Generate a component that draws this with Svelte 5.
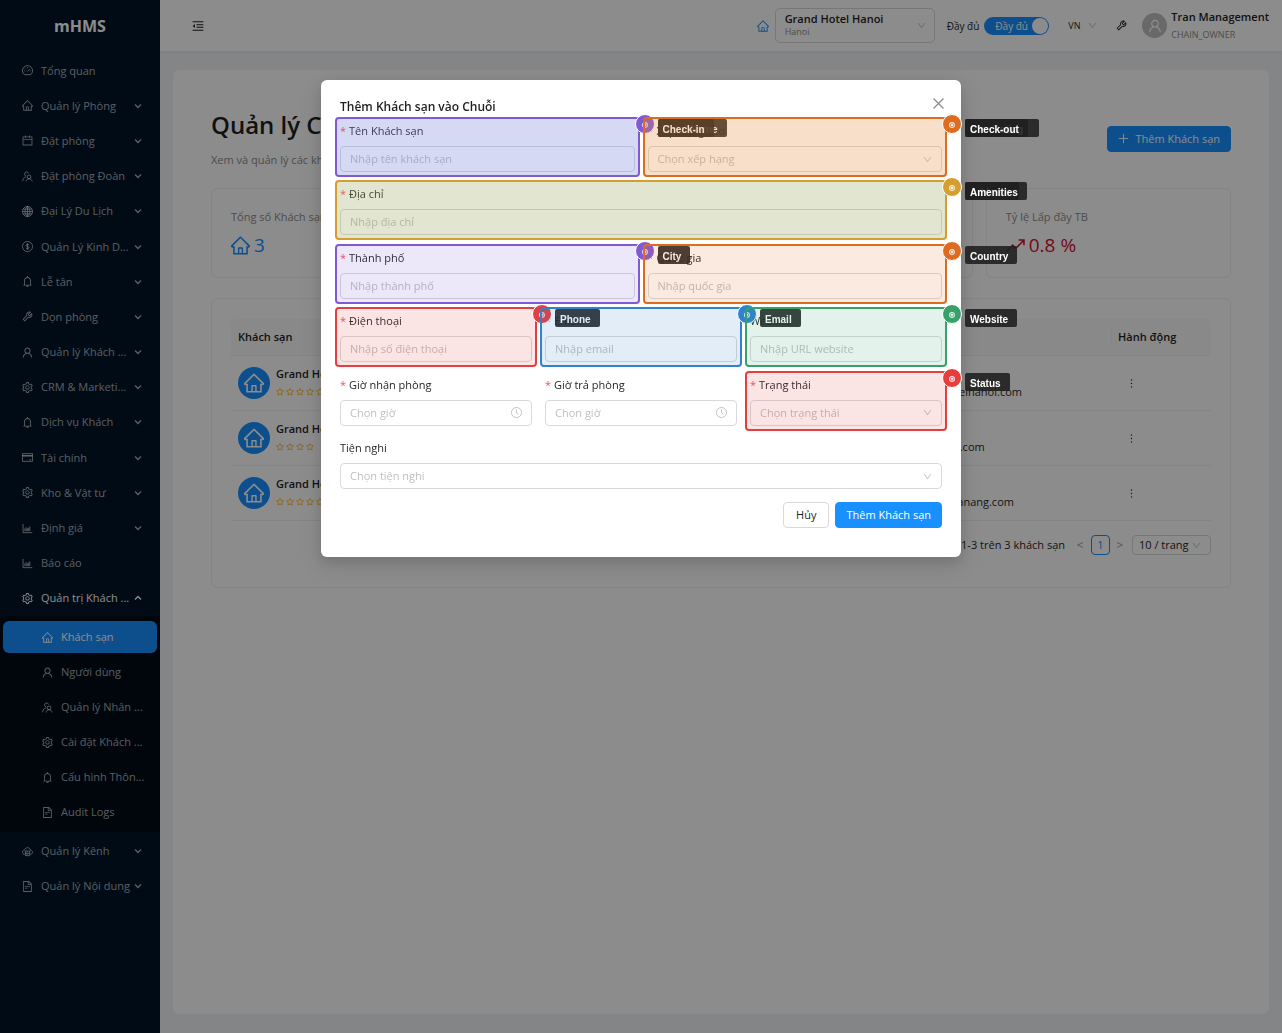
<script>
    // icon outlines live on a 1024 grid: "d" is filled, "line" is stroked
    const icons = {
        home: {
            d: "M946.5 505L560.1 118.8l-25.9-25.9a31.5 31.5 0 00-44.4 0L77.5 505a63.9 63.9 0 00-18.8 46c.4 35.2 29.7 63.3 64.9 63.3h42.5V940h691.8V614.3h43.4c17.1 0 33.2-6.7 45.3-18.8a63.6 63.6 0 0018.7-45.3c0-17-6.7-33.1-18.8-45.2zM568 868H456V664h112v204zm217.9-325.7V868H632V640c0-22.1-17.9-40-40-40H432c-22.1 0-40 17.9-40 40v228H238.1V542.3h-96l370-369.7 23.1 23.1L882 542.3h-96.1z",
        },
        user: {
            d: "M858.5 763.6a374 374 0 00-80.6-119.5 375.63 375.63 0 00-119.5-80.6c-.4-.2-.8-.3-1.2-.5C719.5 518 760 444.7 760 362c0-137-111-248-248-248S264 225 264 362c0 82.7 40.5 156 102.8 201.1-.4.2-.8.3-1.2.5-44.8 18.9-85 46-119.5 80.6a375.63 375.63 0 00-80.6 119.5A371.7 371.7 0 00136 901.8a8 8 0 008 8.2h60c4.4 0 7.9-3.5 8-7.8 2-77.2 33-149.5 87.8-204.3 56.7-56.7 132-87.9 212.2-87.9s155.5 31.2 212.2 87.9C779 752.7 810 825 812 902.2c.1 4.4 3.6 7.8 8 7.8h60a8 8 0 008-8.2c-1-47.8-10.9-94.3-29.5-138.2zM512 534c-45.9 0-89.1-17.9-121.6-50.4S340 407.9 340 362c0-45.9 17.9-89.1 50.4-121.6S466.1 190 512 190s89.1 17.9 121.6 50.4S684 316.1 684 362c0 45.9-17.9 89.1-50.4 121.6S557.9 534 512 534z",
        },
        down: {
            d: "M884 256h-75c-5.1 0-9.9 2.5-12.9 6.6L512 654.2 227.9 262.6c-3-4.1-7.8-6.6-12.9-6.6h-75c-6.5 0-10.3 7.4-6.5 12.7l352.6 486.1c12.8 17.6 39 17.6 51.7 0l352.6-486.1c3.9-5.3.1-12.7-6.4-12.7z",
        },
        calendar: {
            d: "M880 184H712v-64c0-4.4-3.6-8-8-8h-56c-4.4 0-8 3.6-8 8v64H384v-64c0-4.4-3.6-8-8-8h-56c-4.4 0-8 3.6-8 8v64H144c-17.7 0-32 14.3-32 32v664c0 17.7 14.3 32 32 32h736c17.7 0 32-14.3 32-32V216c0-17.7-14.3-32-32-32zm-40 656H184V460h656v380zM184 392V256h128v48c0 4.4 3.6 8 8 8h56c4.4 0 8-3.6 8-8v-48h256v48c0 4.4 3.6 8 8 8h56c4.4 0 8-3.6 8-8v-48h128v136H184z",
        },
        bell: {
            d: "M816 768h-24V428c0-141.1-104.3-257.7-240-277.1V112c0-22.1-17.9-40-40-40s-40 17.9-40 40v38.9c-135.7 19.4-240 136-240 277.1v340h-24c-17.7 0-32 14.3-32 32v32c0 4.4 3.6 8 8 8h216c0 61.8 50.2 112 112 112s112-50.2 112-112h216c4.4 0 8-3.6 8-8v-32c0-17.7-14.3-32-32-32zM512 888c-26.5 0-48-21.5-48-48h96c0 26.5-21.5 48-48 48zM304 768V428c0-55.6 21.6-107.8 60.9-147.1S456.4 220 512 220c55.6 0 107.8 21.6 147.1 60.9S720 372.4 720 428v340H304z",
        },
        tool: {
            d: "M876.6 239.5c-.5-.9-1.2-1.8-2-2.5-5-5-13.1-5-18.1 0L684.2 409.3l-67.9-67.9L788.7 169c.8-.8 1.4-1.6 2-2.5 3.6-6.1 1.6-13.9-4.5-17.5-98.2-58-226.8-44.7-311.3 39.7-67 67-89.2 162-66.5 247.4l-293 293c-3 3-2.8 7.9.3 11l169.7 169.7c3.1 3.1 8.1 3.3 11 .3l292.9-292.9c85.5 22.8 180.5.7 247.6-66.4 84.4-84.5 97.7-213.1 39.7-311.3zM786 499.8c-58.1 58.1-145.3 69.3-214.6 33.6l-8.8 8.8-.1-.1-274 274.1-79.2-79.2 230.1-230.1s0 .1.1.1l52.8-52.8c-35.7-69.3-24.5-156.5 33.6-214.6a184.2 184.2 0 01144-53.5L537 318.9a32.05 32.05 0 000 45.3l124.5 124.5a32.05 32.05 0 0045.3 0l132.8-132.8c3.7 51.8-14.4 104.8-53.6 143.9z",
        },
        file: {
            d: "M854.6 288.6L639.4 73.4c-6-6-14.1-9.4-22.6-9.4H192c-17.7 0-32 14.3-32 32v832c0 17.7 14.3 32 32 32h640c17.7 0 32-14.3 32-32V311.3c0-8.5-3.4-16.7-9.4-22.7zM790.2 326H602V137.8L790.2 326zm1.8 562H232V136h302v216a42 42 0 0042 42h216v494zM504 618H320c-4.4 0-8 3.6-8 8v48c0 4.4 3.6 8 8 8h184c4.4 0 8-3.6 8-8v-48c0-4.4-3.6-8-8-8zM312 490v48c0 4.4 3.6 8 8 8h384c4.4 0 8-3.6 8-8v-48c0-4.4-3.6-8-8-8H320c-4.4 0-8 3.6-8 8z",
        },
        star: {
            d: "M908.1 353.1l-253.9-36.9L540.7 86.1c-3.1-6.3-8.2-11.4-14.5-14.5-15.8-7.8-35-1.3-42.9 14.5L369.8 316.2l-253.9 36.9c-7 1-13.4 4.3-18.3 9.3a32.05 32.05 0 00.6 45.3l183.7 179.1-43.4 252.9a31.95 31.95 0 0046.4 33.7L512 754l227.1 119.4c6.2 3.3 13.4 4.4 20.3 3.2 17.4-3 29.1-19.5 26.1-36.9l-43.4-252.9 183.7-179.1c5-4.9 8.3-11.3 9.3-18.3 2.7-17.5-9.5-33.7-27-36.3zM664.8 561.6l36.1 210.3L512 672.7 323.1 772l36.1-210.3-152.8-149L417.6 382 512 190.7 606.4 382l211.2 30.7-152.8 148.9z",
        },
        setting: {
            d: "M924.8 625.7l-65.5-56c3.1-19 4.7-38.4 4.7-57.8s-1.6-38.8-4.7-57.8l65.5-56a32.03 32.03 0 009.3-35.2l-.9-2.6a443.74 443.74 0 00-79.7-137.9l-1.8-2.1a32.12 32.12 0 00-35.1-9.5l-81.3 28.9c-30-24.6-63.5-44-99.7-57.6l-15.7-85a32.05 32.05 0 00-25.8-25.7l-2.7-.5c-52.1-9.4-106.9-9.4-159 0l-2.7.5a32.05 32.05 0 00-25.8 25.7l-15.8 85.4a351.86 351.86 0 00-99 57.4l-81.9-29.1a32 32 0 00-35.1 9.5l-1.8 2.1a446.02 446.02 0 00-79.7 137.9l-.9 2.6c-4.5 12.5-.8 26.5 9.3 35.2l66.3 56.6c-3.1 18.8-4.6 38-4.6 57.1 0 19.2 1.5 38.4 4.6 57.1L99 625.5a32.03 32.03 0 00-9.3 35.2l.9 2.6c18.1 50.4 44.9 96.9 79.7 137.9l1.8 2.1a32.12 32.12 0 0035.1 9.5l81.9-29.1c29.8 24.5 63.1 43.9 99 57.4l15.8 85.4a32.05 32.05 0 0025.8 25.7l2.7.5a449.4 449.4 0 00159 0l2.7-.5a32.05 32.05 0 0025.8-25.7l15.7-85a350 350 0 0099.7-57.6l81.3 28.9a32 32 0 0035.1-9.5l1.8-2.1c34.8-41.1 61.6-87.5 79.7-137.9l.9-2.6c4.5-12.3.8-26.3-9.3-35zM788.3 465.9c2.5 15.1 3.8 30.6 3.8 46.1s-1.3 31-3.8 46.1l-6.6 40.1 74.7 63.9a370.03 370.03 0 01-42.6 73.6L721 702.8l-31.4 25.8c-23.9 19.6-50.5 35-79.3 45.8l-38.1 14.3-17.9 97a377.5 377.5 0 01-85 0l-17.9-97.2-37.8-14.5c-28.5-10.8-55-26.2-78.7-45.7l-31.4-25.9-93.4 33.2c-17-22.9-31.2-47.6-42.6-73.6l75.5-64.5-6.5-40c-2.4-14.9-3.7-30.3-3.7-45.5 0-15.3 1.2-30.6 3.7-45.5l6.5-40-75.5-64.5c11.3-26.1 25.6-50.7 42.6-73.6l93.4 33.2 31.4-25.9c23.7-19.5 50.2-34.9 78.7-45.7l37.9-14.3 17.9-97.2c28.1-3.2 56.8-3.2 85 0l17.9 97 38.1 14.3c28.7 10.8 55.4 26.2 79.3 45.8l31.4 25.8 92.8-32.9c17 22.9 31.2 47.6 42.6 73.6L781.8 426l6.5 39.9zM512 326c-97.2 0-176 78.8-176 176s78.8 176 176 176 176-78.8 176-176-78.8-176-176-176zm79.2 255.2A111.6 111.6 0 01512 614c-29.9 0-58-11.7-79.2-32.8A111.6 111.6 0 01400 502c0-29.9 11.7-58 32.8-79.2C454 401.6 482.1 390 512 390c29.9 0 58 11.6 79.2 32.8A111.6 111.6 0 01624 502c0 29.9-11.7 58-32.8 79.2z",
        },
        fold: {
            d: "M115.4 518.9L271.7 642c5.8 4.6 14.4.5 14.4-6.9V388.9c0-7.4-8.5-11.5-14.4-6.9L115.4 505.1a8.74 8.74 0 000 13.8z",
            line: "M112 196H912M400 414H912M400 610H912M112 828H912",
        },
        dashboard: {
            line: "M250 850A412 412 0 1 1 774 850ZM512 250V330M250 540H320M704 540H774M326 350L376 400M500 590L690 400",
        },
        team: {
            line: "M400 470A165 165 0 1 1 600 270M120 900C130 690 230 570 390 540M640 690A150 150 0 1 0 640 390A150 150 0 1 0 640 690M390 920C410 780 510 700 640 700S870 780 890 920",
        },
        globe: {
            line: "M512 100A412 412 0 1 0 512 924A412 412 0 1 0 512 100ZM512 100C240 330 240 700 512 924M512 100C784 330 784 700 512 924M512 100V924M100 512H924M165 320H859M165 704H859",
        },
        dollar: {
            line: "M512 100A412 412 0 1 0 512 924A412 412 0 1 0 512 100ZM640 400C620 300 400 300 400 410S640 500 640 620S400 730 385 615M512 260V764",
        },
        card: {
            line: "M100 200H924V824H100ZM100 400H924M100 350H924M660 690H800",
        },
        chart: {
            line: "M150 140V850H900M300 500V728M400 400V728M500 500V728M600 440V728M700 340V728",
        },
        cloud: {
            line: "M280 740C20 720 60 430 260 420C330 130 700 130 765 420C970 430 1000 720 745 740M340 470H690V850H340ZM340 660H690M430 570H520M430 755H520",
        },
        rise: {
            line: "M90 800L380 500L530 640L880 290M660 250H910V500",
        },
        clock: {
            line: "M512 100A412 412 0 1 0 512 924A412 412 0 1 0 512 100ZM512 280V545L670 660",
        },
        plus: { line: "M512 130V894M130 512H894" },
        close: { line: "M170 170L854 854M854 170L170 854" },
        left: { line: "M850 230L250 512L850 794" },
        right: { line: "M174 230L774 512L174 794" },
        more: {
            d: "M456 231a56 56 0 10112 0 56 56 0 10-112 0zm0 280a56 56 0 10112 0 56 56 0 10-112 0zm0 280a56 56 0 10112 0 56 56 0 10-112 0z",
        },
    };

    const menu = [
        { icon: "dashboard", text: "Tổng quan", leaf: true },
        { icon: "home", text: "Quản lý Phòng" },
        { icon: "calendar", text: "Đặt phòng" },
        { icon: "team", text: "Đặt phòng Đoàn" },
        { icon: "globe", text: "Đại Lý Du Lịch" },
        { icon: "dollar", text: "Quản Lý Kinh D..." },
        { icon: "bell", text: "Lễ tân" },
        { icon: "tool", text: "Dọn phòng" },
        { icon: "user", text: "Quản lý Khách ..." },
        { icon: "setting", text: "CRM & Marketi..." },
        { icon: "bell", text: "Dịch vụ Khách" },
        { icon: "card", text: "Tài chính" },
        { icon: "setting", text: "Kho & Vật tư" },
        { icon: "chart", text: "Định giá" },
        { icon: "chart", text: "Báo cáo", leaf: true },
        { icon: "setting", text: "Quản trị Khách ...", open: true },
    ];
    const submenu = [
        { icon: "home", text: "Khách sạn", active: true },
        { icon: "user", text: "Người dùng" },
        { icon: "team", text: "Quản lý Nhân ..." },
        { icon: "setting", text: "Cài đặt Khách ..." },
        { icon: "bell", text: "Cấu hình Thôn..." },
        { icon: "file", text: "Audit Logs" },
    ];
    const menuEnd = [
        { icon: "cloud", text: "Quản lý Kênh" },
        { icon: "file", text: "Quản lý Nội dung" },
    ];

    const stats = [
        { title: "Tổng số Khách sạn", icon: "home", value: "3", tone: "blue" },
        { title: "Tổng số Phòng", icon: "home", value: "120", tone: "blue" },
        { title: "Đang hoạt động", icon: "home", value: "3", tone: "blue" },
        { title: "Tỷ lệ Lấp đầy TB", icon: "rise", value: "0.8 %", tone: "red" },
    ];

    const hotels = [
        { name: "Grand Hotel Hanoi", stars: 5, phone: "024 3826 888", mail: "info@grandhotelhanoi.com" },
        { name: "Grand Hotel Saigon", stars: 4, phone: "028 3829 888", mail: "info@grandsgn.com" },
        { name: "Grand Hotel Danang", stars: 5, phone: "023 6382 888", mail: "hello@grand-danang.com" },
    ];

    // form rows, each field may carry a coloured marker with its tags
    const rows = [
        [
            { id: "name", label: "Tên Khách sạn", hint: "Nhập tên khách sạn", required: true, mark: "violet deep", tags: ["Hotel Name", "Check-in"] },
            { id: "rank", label: "Xếp hạng sao", hint: "Chọn xếp hạng", required: true, type: "select", mark: "orange deep", tags: ["Star Rating", "Check-out"] },
        ],
        [
            { id: "address", label: "Địa chỉ", hint: "Nhập địa chỉ", required: true, mark: "gold deep", tags: ["Address", "Amenities"] },
        ],
        [
            { id: "city", label: "Thành phố", hint: "Nhập thành phố", required: true, mark: "violet", tags: ["City"] },
            { id: "country", label: "Quốc gia", hint: "Nhập quốc gia", required: true, mark: "orange", tags: ["Country"] },
        ],
        [
            { id: "phone", label: "Điện thoại", hint: "Nhập số điện thoại", required: true, mark: "red", tags: ["Phone"] },
            { id: "email", label: "Email", hint: "Nhập email", required: true, mark: "blue", tags: ["Email"] },
            { id: "website", label: "Website", hint: "Nhập URL website", mark: "green", tags: ["Website"] },
        ],
        [
            { id: "checkin", label: "Giờ nhận phòng", hint: "Chọn giờ", required: true, type: "time" },
            { id: "checkout", label: "Giờ trả phòng", hint: "Chọn giờ", required: true, type: "time" },
            { id: "status", label: "Trạng thái", hint: "Chọn trạng thái", required: true, type: "select", mark: "red", tags: ["Status"] },
        ],
    ];
    const amenities = { id: "amenities", label: "Tiện nghi", hint: "Chọn tiện nghi", type: "select" };
</script>

{#snippet icon(name, size = 11, weight = 76)}
    <svg class="icon" width={size} height={size} viewBox="64 64 896 896" aria-hidden="true">
        {#if icons[name].d}<path d={icons[name].d} fill="currentColor" />{/if}
        {#if icons[name].line}
            <path d={icons[name].line} fill="none" stroke="currentColor" stroke-width={weight} />
        {/if}
    </svg>
{/snippet}

{#snippet menuItem(item)}
    <li>
        <a href="#menu" class="item" class:active={item.active}>
            {@render icon(item.icon)}
            <span class="text">{item.text}</span>
        </a>
    </li>
{/snippet}

{#snippet menuGroup(item)}
    <li>
        <a href="#menu" class="item" class:open={item.open}>
            {@render icon(item.icon)}
            <span class="text">{item.text}</span>
            {#if !item.leaf}
                <svg class="caret" width="8" height="8" viewBox="0 0 8 8" aria-hidden="true">
                    <path d="M1 2.5L4 5.5L7 2.5" fill="none" stroke="currentColor" stroke-width="1.4" />
                </svg>
            {/if}
        </a>
    </li>
{/snippet}

{#snippet field(f)}
    <div class="field">
        <label for={f.id}>
            {#if f.required}<span class="star">*</span>{/if}{f.label}
        </label>
        <div class="control">
            {#if f.type === "select"}
                <select id={f.id}>
                    <option>{f.hint}</option>
                </select>
                {@render icon("down", 9)}
            {:else}
                <input id={f.id} type="text" placeholder={f.hint} />
                {#if f.type === "time"}{@render icon("clock", 11)}{/if}
            {/if}
        </div>
        {#if f.mark}
            <div class="mark {f.mark}">
                <span class="dot">
                    <svg width="6" height="6" viewBox="0 0 6 6" aria-hidden="true">
                        <circle cx="3" cy="3" r="2.4" fill="none" stroke="#fff" stroke-width="1.1" />
                        <circle cx="3" cy="3" r="1.3" fill="#fff" />
                    </svg>
                </span>
                {#each f.tags as tag}
                    <span class="tag">{tag}</span>
                {/each}
            </div>
        {/if}
    </div>
{/snippet}

<div class="layout">
    <aside>
        <div class="brand">mHMS</div>
        <nav>
            <ul class="menu">
                {#each menu as item}
                    {@render menuGroup(item)}
                {/each}
            </ul>
            <ul class="submenu">
                {#each submenu as item}
                    {@render menuItem(item)}
                {/each}
            </ul>
            <ul class="menu-end">
                {#each menuEnd as item}
                    {@render menuGroup(item)}
                {/each}
            </ul>
        </nav>
    </aside>

    <div class="main">
        <header>
            <button class="plain" aria-label="Menu">{@render icon("fold", 12)}</button>
            <div class="tools">
                <span class="blue">{@render icon("home", 12)}</span>
                <button class="hotel-select" aria-haspopup="listbox">
                    <span class="hotel-text">
                        <b>Grand Hotel Hanoi</b>
                        <small>Hanoi</small>
                    </span>
                    {@render icon("down", 9)}
                </button>
                <span class="mode" id="mode">Đầy đủ</span>
                <button class="switch" role="switch" aria-checked="true" aria-labelledby="mode">
                    <span>Đầy đủ</span>
                    <i></i>
                </button>
                <div class="lang">
                    <select aria-label="Language"><option>VN</option></select>
                    {@render icon("down", 9)}
                </div>
                <button class="plain" aria-label="Tools">{@render icon("tool", 11)}</button>
                <div class="profile">
                    <span class="avatar">{@render icon("user", 14)}</span>
                    <div>
                        <b>Tran Management</b>
                        <small>CHAIN_OWNER</small>
                    </div>
                </div>
            </div>
        </header>

        <main>
            <div class="heading">
                <div>
                    <h1>Quản lý Chuỗi Khách sạn</h1>
                    <p>Xem và quản lý các khách sạn trong chuỗi</p>
                </div>
                <button class="primary">{@render icon("plus", 11, 76)} Thêm Khách sạn</button>
            </div>

            <section class="stats">
                {#each stats as s}
                    <div class="stat">
                        <div class="stat-title">{s.title}</div>
                        <div class="stat-value {s.tone}">
                            {@render icon(s.icon, 19)}
                            {s.value}
                        </div>
                    </div>
                {/each}
            </section>

            <section class="list">
                <table>
                    <thead>
                        <tr>
                            <th>Khách sạn</th>
                            <th class="contact">Liên hệ</th>
                            <th class="action">Hành động</th>
                        </tr>
                    </thead>
                    <tbody>
                        {#each hotels as h}
                            <tr>
                                <td>
                                    <div class="hotel">
                                        <span class="badge">{@render icon("home", 20)}</span>
                                        <div>
                                            <b>{h.name}</b>
                                            <div class="stars">
                                                {#each Array(h.stars) as _}{@render icon("star", 8)}{/each}
                                            </div>
                                        </div>
                                    </div>
                                </td>
                                <td class="contact">
                                    <div>{h.phone}</div>
                                    <div>{h.mail}</div>
                                </td>
                                <td class="action">
                                    <button class="plain" aria-label="Thao tác">{@render icon("more", 11)}</button>
                                </td>
                            </tr>
                        {/each}
                    </tbody>
                </table>
                <div class="pager">
                    <span>1-3 trên 3 khách sạn</span>
                    <button class="plain arrow" aria-label="Trước">{@render icon("left", 8, 90)}</button>
                    <button class="page">1</button>
                    <button class="plain arrow" aria-label="Sau">{@render icon("right", 8, 90)}</button>
                    <div class="page-size">
                        <select aria-label="Số dòng"><option>10 / trang</option></select>
                        {@render icon("down", 9)}
                    </div>
                </div>
            </section>
        </main>
    </div>
</div>

<div class="mask">
    <div class="modal" role="dialog" aria-modal="true" aria-labelledby="modal-title">
        <div class="modal-head">
            <h2 id="modal-title">Thêm Khách sạn vào Chuỗi</h2>
            <button class="plain" aria-label="Đóng">{@render icon("close", 13, 84)}</button>
        </div>
        <form>
            <div class="rows">
                {#each rows as row}
                    <div class="row">
                        {#each row as f}
                            {@render field(f)}
                        {/each}
                    </div>
                {/each}
            </div>
            {@render field(amenities)}
            <div class="buttons">
                <button type="button" class="cancel">Hủy</button>
                <button type="button" class="primary">Thêm Khách sạn</button>
            </div>
        </form>
    </div>
</div>

<style>
    :global(body) {
        margin: 0;
        font-family: "Open Sans", "Noto Sans", sans-serif;
        font-size: 11px;
        line-height: 18px;
        color: #1f1f1f;
    }
    * {
        box-sizing: border-box;
    }
    button,
    select,
    input {
        font: inherit;
        color: inherit;
    }
    b {
        font-weight: 600;
    }
    ul {
        list-style: none;
        margin: 0;
        padding: 0;
    }
    select {
        appearance: none;
        border: 0;
        padding: 0;
        background: none;
        outline: 0;
        min-width: 0;
    }
    .icon {
        display: block;
        flex: none;
    }
    .plain {
        border: 0;
        background: none;
        padding: 0;
        display: flex;
    }
    .blue {
        color: #1890ff;
    }
    .red {
        color: #cf1332;
    }

    .layout {
        display: flex;
        min-height: 100vh;
        background: #f0f2f5;
    }

    /* sidebar */
    aside {
        width: 160px;
        flex: none;
        background: #001529;
        color: rgba(255, 255, 255, 0.65);
    }
    .brand {
        height: 53px;
        line-height: 53px;
        text-align: center;
        font-size: 16px;
        font-weight: 700;
        color: #fff;
    }
    .menu {
        display: grid;
        grid-template-columns: minmax(0, 1fr);
        grid-auto-rows: 1fr;
        align-items: center;
        min-height: 563px;
    }
    .item {
        display: flex;
        align-items: center;
        height: 32px;
        margin: 0 3px;
        padding: 0 15px 0 19px;
        border-radius: 6px;
        color: inherit;
        text-decoration: none;
        white-space: nowrap;
    }
    .text {
        margin-left: 8px;
    }
    .item.open {
        color: #fff;
    }
    .item.open .caret {
        transform: rotate(180deg);
    }
    .caret {
        margin-left: auto;
        flex: none;
    }
    .submenu {
        background: #000c17;
        padding: 5px 0 1px;
    }
    .submenu li {
        padding-bottom: 3px;
    }
    .submenu .item {
        padding: 0 0 0 39px;
    }
    .item.active {
        background: #1890ff;
        color: #fff;
    }
    .menu-end li {
        padding-top: 3px;
    }

    /* header */
    .main {
        flex: 1;
        min-width: 0;
        display: flex;
        flex-direction: column;
    }
    header {
        display: flex;
        align-items: center;
        justify-content: space-between;
        height: 51px;
        padding: 0 13px 0 32px;
        background: #fff;
        box-shadow: 0 1px 4px rgba(0, 21, 41, 0.08);
    }
    .tools {
        display: flex;
        align-items: center;
    }
    .hotel-select {
        display: flex;
        align-items: center;
        justify-content: space-between;
        width: 160px;
        height: 35px;
        margin: 0 12px 0 6px;
        padding: 0 8px 0 9px;
        border: 1px solid #d9d9d9;
        border-radius: 5px;
        background: #fff;
        text-align: left;
        color: #1f1f1f;
    }
    .hotel-select .icon,
    .lang .icon,
    .page-size .icon,
    .control .icon {
        color: #bfbfbf;
    }
    .hotel-text b,
    .hotel-text small,
    .profile b,
    .profile small {
        display: block;
    }
    .hotel-text {
        padding-bottom: 2px;
    }
    .hotel-text b {
        line-height: 14px;
    }
    .hotel-text small {
        line-height: 12px;
    }
    small {
        font-size: 9px;
        color: #8c8c8c;
    }
    .mode {
        font-size: 10px;
    }
    .switch {
        display: flex;
        align-items: center;
        justify-content: space-between;
        width: 65px;
        height: 18px;
        margin: 0 19px 0 5px;
        padding: 0 1px 0 11px;
        border: 0;
        border-radius: 9px;
        background: #1890ff;
        color: #fff;
        font-size: 10px;
    }
    .switch i {
        width: 16px;
        height: 16px;
        border-radius: 50%;
        background: #fff;
    }
    .lang {
        display: flex;
        align-items: center;
        gap: 7px;
        margin-right: 19px;
        font-size: 9px;
    }
    .profile {
        display: flex;
        align-items: center;
        gap: 4px;
        margin-left: 15px;
    }
    .avatar {
        display: flex;
        align-items: center;
        justify-content: center;
        width: 25px;
        height: 25px;
        border-radius: 50%;
        background: #bfbfbf;
        color: #fff;
    }

    /* page */
    main {
        flex: 1;
        margin: 19px 13px;
        padding: 38px;
        border-radius: 6px;
        background: #fff;
    }
    .heading {
        display: flex;
        justify-content: space-between;
        align-items: center;
        margin-bottom: 19px;
    }
    h1 {
        margin: 0 0 9px;
        font-size: 24px;
        line-height: 34px;
        font-weight: 600;
    }
    p {
        margin: 0;
        color: #8c8c8c;
    }
    .primary,
    .cancel {
        display: flex;
        align-items: center;
        gap: 6px;
        height: 26px;
        padding: 0 10px;
        border: 1px solid #1890ff;
        border-radius: 4px;
        background: #1890ff;
        color: #fff;
        white-space: nowrap;
    }
    .stats {
        display: grid;
        grid-template-columns: repeat(4, 1fr);
        gap: 13px;
        margin-bottom: 20px;
    }
    .stat {
        height: 90px;
        padding: 19px;
        border: 1px solid #f0f0f0;
        border-radius: 6px;
    }
    .stat-title {
        color: #8c8c8c;
    }
    .stat-value {
        display: flex;
        align-items: center;
        gap: 4px;
        margin-top: 4px;
        font-size: 19px;
        line-height: 30px;
    }
    .list {
        padding: 20px 19px;
        border: 1px solid #f0f0f0;
        border-radius: 6px;
        min-height: 290px;
    }
    table {
        width: 100%;
        border-collapse: separate;
        border-spacing: 0;
        table-layout: fixed;
    }
    th {
        height: 37px;
        padding: 0 7px;
        text-align: left;
        font-weight: 600;
        background: #fafafa;
        border-bottom: 1px solid #f0f0f0;
    }
    th:first-child {
        border-radius: 6px 0 0 0;
    }
    th:last-child {
        border-radius: 0 6px 0 0;
        background-image: linear-gradient(#f0f0f0, #f0f0f0);
        background-size: 1px 18px;
        background-position: 0 50%;
        background-repeat: no-repeat;
    }
    td {
        height: 55px;
        padding: 0 7px;
        border-bottom: 1px solid #f0f0f0;
    }
    .contact {
        width: 236px;
    }
    .action {
        width: 100px;
    }
    td.action {
        padding-left: 15px;
    }
    .hotel {
        display: flex;
        align-items: center;
        gap: 6px;
    }
    .badge {
        display: flex;
        align-items: center;
        justify-content: center;
        width: 32px;
        height: 32px;
        border-radius: 50%;
        background: #1890ff;
        color: #fff;
    }
    .stars {
        display: flex;
        align-items: center;
        gap: 2px;
        height: 18px;
        color: #faad14;
    }
    .pager {
        display: flex;
        align-items: center;
        justify-content: flex-end;
        margin-top: 14px;
    }
    .pager .arrow {
        margin: 0 7px 0 11px;
        color: #8c8c8c;
    }
    .pager .page + .arrow {
        margin: 0 8px 0 6px;
    }
    .page {
        width: 19px;
        height: 20px;
        padding: 0;
        border: 1px solid #1890ff;
        border-radius: 4px;
        background: #fff;
        color: #1890ff;
    }
    .page-size {
        display: flex;
        align-items: center;
        gap: 3px;
        height: 20px;
        padding: 0 9px 0 6px;
        border: 1px solid #d9d9d9;
        border-radius: 4px;
    }

    /* modal */
    .mask {
        position: fixed;
        inset: 0;
        display: flex;
        justify-content: center;
        align-items: flex-start;
        padding-top: 80px;
        background: rgba(0, 0, 0, 0.45);
    }
    .modal {
        width: 640px;
        padding: 17px 19px 29px;
        border-radius: 6px;
        background: #fff;
        box-shadow: 0 5px 13px rgba(0, 0, 0, 0.12), 0 7px 22px 6px rgba(0, 0, 0, 0.08);
    }
    .modal-head {
        display: flex;
        justify-content: space-between;
        align-items: flex-start;
        margin: 0 -3px 4px 0;
    }
    .modal-head .plain {
        color: #8c8c8c;
    }
    h2 {
        margin: 0;
        font-size: 12px;
        line-height: 20px;
        font-weight: 600;
    }
    .rows {
        display: grid;
        grid-auto-rows: 1fr;
        min-height: 317px;
    }
    .row {
        display: flex;
        align-items: flex-start;
        gap: 13px;
    }
    .field {
        position: relative;
        flex: 1;
        min-width: 0;
    }
    label {
        display: block;
        line-height: 20px;
        margin-bottom: 5px;
    }
    .star {
        margin-right: 3px;
        color: #ff4d4f;
    }
    .control {
        display: flex;
        align-items: center;
        height: 26px;
        padding: 0 9px;
        border: 1px solid #d9d9d9;
        border-radius: 4px;
        background: #fff;
    }
    .control input,
    .control select {
        flex: 1;
        width: 100%;
        min-width: 0;
        padding: 0;
        border: 0;
        outline: 0;
        background: none;
    }
    .control select,
    .control input::placeholder {
        color: #bfbfbf;
        opacity: 1;
    }
    .buttons {
        display: flex;
        justify-content: flex-end;
        gap: 6px;
        margin-top: 13px;
    }
    .cancel {
        padding: 0 12px;
        border-color: #d9d9d9;
        background: #fff;
        color: #1f1f1f;
    }

    /* markers drawn over the fields */
    .mark {
        position: absolute;
        inset: -4px -5px -5px;
        z-index: 1;
        border: 2px solid var(--line);
        border-radius: 4px;
        background: var(--fill);
        pointer-events: none;
    }
    .violet {
        --line: #805ad5;
        --fill: rgba(128, 90, 213, 0.14);
    }
    .orange {
        --line: #dd6b20;
        --fill: rgba(221, 107, 32, 0.14);
    }
    .gold {
        --line: #d69e2e;
    }
    .red.mark {
        --line: #e53e3e;
        --fill: rgba(229, 62, 62, 0.14);
    }
    .blue.mark {
        --line: #3182ce;
        --fill: rgba(49, 130, 206, 0.14);
    }
    .green {
        --line: #38a169;
        --fill: rgba(56, 161, 105, 0.14);
    }
    .violet.deep {
        --fill: rgba(105, 119, 212, 0.28);
    }
    .orange.deep {
        --fill: rgba(226, 141, 66, 0.28);
    }
    .gold.deep {
        --fill: rgba(152, 162, 84, 0.28);
    }
    .dot {
        position: absolute;
        top: -5px;
        right: -17px;
        display: flex;
        align-items: center;
        justify-content: center;
        width: 20px;
        height: 20px;
        padding-top: 2px;
        border: 1px solid #fff;
        border-radius: 50%;
        background: var(--line);
    }
    .dot svg {
        opacity: 0.8;
    }
    .tag {
        position: absolute;
        top: 0;
        left: calc(100% + 20px);
        height: 18px;
        padding: 2px 9px 0 5px;
        border-radius: 2px;
        background: rgba(32, 32, 32, 0.9);
        color: #fff;
        font-family: "Liberation Sans", Arial, sans-serif;
        font-size: 10px;
        font-weight: 700;
        white-space: nowrap;
    }
    .orange.deep .tag:not(:last-child) {
        padding-right: 16px;
    }
</style>
